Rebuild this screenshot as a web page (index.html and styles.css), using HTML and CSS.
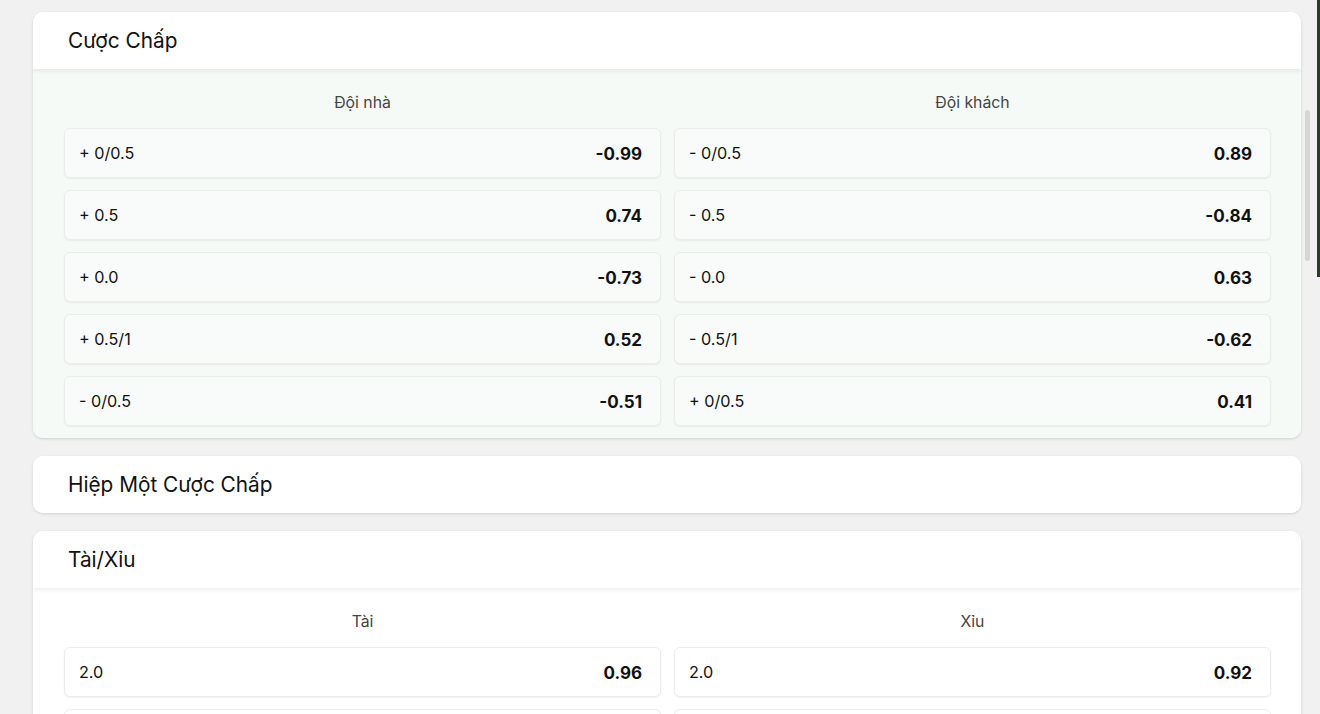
FILE: index.html
```html
<!DOCTYPE html>
<html lang="vi">
<head>
    <meta charset="UTF-8">
    <meta name="viewport" content="width=device-width, initial-scale=1.0">
    <title>Kèo trận đấu</title>
    <link rel="stylesheet" href="styles.css">
</head>
<body>

<div class="page">
    <div class="markets">

        <!-- Cược Chấp: mở -->
        <div class="market open">
            <div class="market-head">Cược Chấp</div>
            <div class="market-body">
                <div class="odds-col">
                    <div class="col-title">Đội nhà</div>
                    <div class="odd"><span>+ 0/0.5</span><b>-0.99</b></div>
                    <div class="odd"><span>+ 0.5</span><b>0.74</b></div>
                    <div class="odd"><span>+ 0.0</span><b>-0.73</b></div>
                    <div class="odd"><span>+ 0.5/1</span><b>0.52</b></div>
                    <div class="odd"><span>- 0/0.5</span><b>-0.51</b></div>
                </div>
                <div class="odds-col">
                    <div class="col-title">Đội khách</div>
                    <div class="odd"><span>- 0/0.5</span><b>0.89</b></div>
                    <div class="odd"><span>- 0.5</span><b>-0.84</b></div>
                    <div class="odd"><span>- 0.0</span><b>0.63</b></div>
                    <div class="odd"><span>- 0.5/1</span><b>-0.62</b></div>
                    <div class="odd"><span>+ 0/0.5</span><b>0.41</b></div>
                </div>
            </div>
        </div>

        <!-- Hiệp Một Cược Chấp: đóng -->
        <div class="market">
            <div class="market-head">Hiệp Một Cược Chấp</div>
        </div>

        <!-- Tài/Xỉu -->
        <div class="market">
            <div class="market-head">Tài/Xỉu</div>
            <div class="market-body plain">
                <div class="odds-col">
                    <div class="col-title">Tài</div>
                    <div class="odd"><span>2.0</span><b>0.96</b></div>
                    <div class="odd"><span>2.5</span><b>0.71</b></div>
                </div>
                <div class="odds-col">
                    <div class="col-title">Xỉu</div>
                    <div class="odd"><span>2.0</span><b>0.92</b></div>
                    <div class="odd"><span>2.5</span><b>-0.81</b></div>
                </div>
            </div>
        </div>

    </div>

    <div class="rail">
        <div class="thumb"></div>
    </div>
    <div class="edge"></div>
</div>

</body>
</html>
```

FILE: styles.css
```css
body {
    font-family: Inter, "Noto Sans", Arial, sans-serif;
    margin: 0;
    padding: 0;
    background-color: #f1f1f1;
    color: #111;
    overflow: hidden;
}

.page {
    display: flex;
    height: 714px;
    overflow: hidden;
}

.markets {
    width: 1268px;
    padding: 12px 0 0 33px;
    display: flex;
    flex-direction: column;
    gap: 18px;
    flex-shrink: 0;
}

.market {
    background-color: #fff;
    border-radius: 10px;
    box-shadow: 0 1px 3px rgba(0, 0, 0, 0.14);
    overflow: hidden;
    flex-shrink: 0;
}

.market-head {
    height: 57px;
    display: flex;
    align-items: center;
    padding-left: 35px;
    font-size: 20.8px;
    background-color: #fff;
    position: relative;
    z-index: 1;
}

.market-head:not(:last-child) {
    box-shadow: 0 2px 4px rgba(0, 0, 0, 0.07);
}

.market-body {
    display: flex;
    gap: 13px;
    padding: 23px 30px 12px 31px;
    background-color: #f5faf7;
}

.market-body.plain {
    background-color: #fff;
}

.odds-col {
    flex: 1;
    display: flex;
    flex-direction: column;
    gap: 12px;
}

.col-title {
    text-align: center;
    font-size: 15.8px;
    color: #444;
    height: 22px;
    line-height: 22px;
    margin-bottom: 2px;
}

.odd {
    height: 48px;
    display: flex;
    align-items: center;
    justify-content: space-between;
    padding: 0 18px 0 14px;
    border: 1px solid #e9eeea;
    border-radius: 6px;
    background-color: #f8fbf9;
    box-shadow: 0 1px 2px rgba(0, 0, 0, 0.06);
}

.plain .odd {
    background-color: #fff;
    border-color: #ececec;
}

.odd span {
    font-size: 16.2px;
}

.odd b {
    font-size: 17px;
    font-weight: 700;
    margin-top: 2px;
}

.rail {
    width: 16px;
    padding-top: 110px;
    display: flex;
    justify-content: center;
}

.thumb {
    width: 5px;
    height: 151px;
    margin-left: -3px;
    border-radius: 3px;
    background-color: #d6d6d6;
}

.edge {
    width: 3px;
    height: 277px;
    background-color: #2c3a2a;
}
```
